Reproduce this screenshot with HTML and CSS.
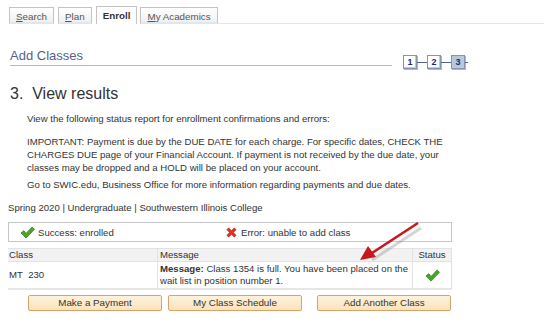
FILE: index.html
```html
<!DOCTYPE html>
<html lang="en">

<head>
    <meta charset="UTF-8">
    <title>Add Classes</title>
    <link rel="stylesheet" href="styles.css">
</head>

<body>
    <div class="tabs">
        <a class="tab"><u>S</u>earch</a>
        <a class="tab"><u>P</u>lan</a>
        <a class="tab active">Enroll</a>
        <a class="tab"><u>M</u>y Academics</a>
        <span class="tab-rest"></span>
    </div>

    <div class="header">
        <h1 class="title">Add Classes</h1>
        <div class="steps">
            <span class="step">1</span>
            <span class="link"></span>
            <span class="step">2</span>
            <span class="link"></span>
            <span class="step current">3</span>
            <span class="link short"></span>
        </div>
    </div>

    <h2 class="step-title">3.&nbsp; View results</h2>

    <div class="intro">
        <p>View the following status report for enrollment confirmations and errors:</p>
        <p class="important">IMPORTANT: Payment is due by the DUE DATE for each charge. For specific dates, CHECK THE CHARGES DUE page of your Financial Account. If payment is not received by the due date, your classes may be dropped and a HOLD will be placed on your account.</p>
        <p>Go to SWIC.edu, Business Office for more information regarding payments and due dates.</p>
    </div>

    <p class="term">Spring 2020 | Undergraduate | Southwestern Illinois College</p>

    <div class="legend">
        <span class="legend-item">
            <svg class="ico" viewBox="0 0 16 14"><path d="M1 7.5 L4 5 L6.5 8 L13 1 L15.5 3.5 L6.5 13 Z" fill="#4aa628" stroke="#2f7d16" stroke-width="0.8"/></svg>
            Success: enrolled
        </span>
        <span class="legend-item err">
            <svg class="ico" viewBox="0 0 14 14"><path d="M2 4 L4 2 L7 5 L10 2 L12 4 L9 7 L12 10 L10 12 L7 9 L4 12 L2 10 L5 7 Z" fill="#e0301e" stroke="#b2200f" stroke-width="0.6"/></svg>
            Error: unable to add class
        </span>
    </div>

    <table class="results">
        <tr>
            <th class="c-class">Class</th>
            <th class="c-msg">Message</th>
            <th class="c-status">Status</th>
        </tr>
        <tr>
            <td>MT&nbsp; 230</td>
            <td class="c-msg"><span class="msg-label">Message:</span> Class 1354 is full. You have been placed on the wait list in position number 1.</td>
            <td class="c-status">
                <svg class="ico" viewBox="0 0 16 14"><path d="M1 7.5 L4 5 L6.5 8 L13 1 L15.5 3.5 L6.5 13 Z" fill="#4aa628" stroke="#2f7d16" stroke-width="0.8"/></svg>
            </td>
        </tr>
    </table>

    <div class="actions">
        <button class="btn">Make a Payment</button>
        <button class="btn">My Class Schedule</button>
        <button class="btn">Add Another Class</button>
    </div>

    <svg class="arrow" width="80" height="50" viewBox="0 0 80 50">
        <line x1="65" y1="6" x2="16" y2="38" stroke="#888" stroke-width="3" opacity="0.35" transform="translate(2,3)"/>
        <line x1="64" y1="4" x2="18" y2="34" stroke="#c8161d" stroke-width="2.6"/>
        <path d="M6 41 L14 27 L22 38 Z" fill="#c8161d"/>
    </svg>
</body>

</html>
```

FILE: styles.css
```css
body,
html {
    margin: 0;
}

body {
    position: relative;
    width: 544px;
    height: 323px;
    font-family: Arial, "Liberation Sans", sans-serif;
    font-size: 9.6px;
    color: #333;
    background-color: #fff;
}

p {
    margin: 0;
}

/* tabs */
.tabs {
    display: flex;
    align-items: flex-end;
    padding: 6px 0 0 9px;
    height: 18px;
}

.tab {
    box-sizing: border-box;
    height: 17px;
    margin-right: 4px;
    padding: 2px 6px 0;
    border: 1px solid #c3c3c3;
    border-bottom: 2px solid #dfe6ee;
    background: linear-gradient(#ffffff, #f0f0f0);
    color: #555;
    font-size: 9.8px;
    line-height: 13px;
}

.tab.active {
    height: 18px;
    margin-right: 3px;
    padding: 2px 6px 0;
    border-bottom: 0;
    background: #fff;
    color: #333;
    font-weight: bold;
}

.tab-rest {
    flex: 1;
    margin-left: -4px;
    border-bottom: 1px solid #dfe6ee;
}

/* header */
.header {
    display: flex;
    align-items: flex-end;
    margin: 24px 0 0 10px;
}

.title {
    box-sizing: border-box;
    width: 382px;
    margin: 0;
    padding-bottom: 1px;
    border-bottom: 1px solid #b8b8b8;
    color: #55608a;
    font-size: 13px;
    font-weight: normal;
    line-height: 16px;
}

.steps {
    display: flex;
    align-items: center;
    margin: 0 0 -3px 11px;
}

.step {
    box-sizing: border-box;
    width: 14px;
    height: 14px;
    border: 1px solid #8a93b3;
    box-shadow: inset -1px -1px 0 #c3c8d8, 1px 1px 0 #b0b6c8;
    background: #fff;
    color: #1e2a78;
    font-size: 9px;
    font-weight: bold;
    line-height: 12px;
    text-align: center;
}

.step.current {
    background: #b7c8dc;
}

.link {
    width: 10px;
    height: 1px;
    background: #56628e;
}

.link.short {
    width: 3px;
}

/* intro */
.step-title {
    margin: 19px 0 0 10px;
    font-size: 16px;
    font-weight: normal;
    line-height: 18px;
    color: #333;
}

.intro {
    margin: 9px 0 0 27px;
    width: 425px;
    line-height: 13px;
}

.intro p {
    margin-bottom: 10px;
}

.intro p.important {
    margin-bottom: 4px;
}

.term {
    margin: 0 0 0 8px;
    line-height: 13px;
}

/* legend */
.legend {
    box-sizing: border-box;
    display: flex;
    align-items: center;
    width: 444px;
    height: 20px;
    margin: 8px 0 0 8px;
    padding-left: 11px;
    border: 1px solid #c6c6c6;
}

.legend-item {
    display: flex;
    align-items: center;
    width: 205px;
}

.legend-item .ico {
    width: 15px;
    height: 13px;
    margin-right: 3px;
}

.legend-item.err .ico {
    width: 13px;
}

/* table */
.results {
    width: 444px;
    margin: 6px 0 0 8px;
    border-collapse: collapse;
}

.results th {
    height: 12px;
    padding: 0 1px;
    border: 1px solid #e2e2e2;
    border-width: 1px 0 1px 0;
    background: #f2f2f2;
    font-weight: normal;
    text-align: left;
    line-height: 12px;
}

.results td {
    height: 26px;
    padding: 0 1px;
    border-bottom: 2px solid #e6e6e6;
    line-height: 12px;
    vertical-align: middle;
}

.results .c-class {
    width: 147px;
}

.results .c-msg {
    border-left: 1px solid #e2e2e2;
    padding-left: 2px;
}

.msg-label {
    font-weight: bold;
}

.results .c-status {
    width: 36px;
    border-left: 1px solid #e2e2e2;
    border-right: 1px solid #e2e2e2;
    text-align: center;
}

.results .c-status .ico {
    width: 15px;
    height: 13px;
    vertical-align: middle;
}

/* buttons */
.actions {
    display: flex;
    gap: 6px;
    margin: 5px 0 0 28px;
}

.btn {
    width: 134px;
    height: 16px;
    padding: 0;
    border: 1px solid #d8a36b;
    border-radius: 2px;
    background: linear-gradient(#fdf2de, #fbe3b8);
    color: #333;
    font-family: Arial, "Liberation Sans", sans-serif;
    font-size: 9.8px;
    line-height: 14px;
}

.btn:last-child {
    margin-left: 9px;
}

/* annotation arrow over the table */
.arrow {
    position: absolute;
    left: 354px;
    top: 219px;
}
```
